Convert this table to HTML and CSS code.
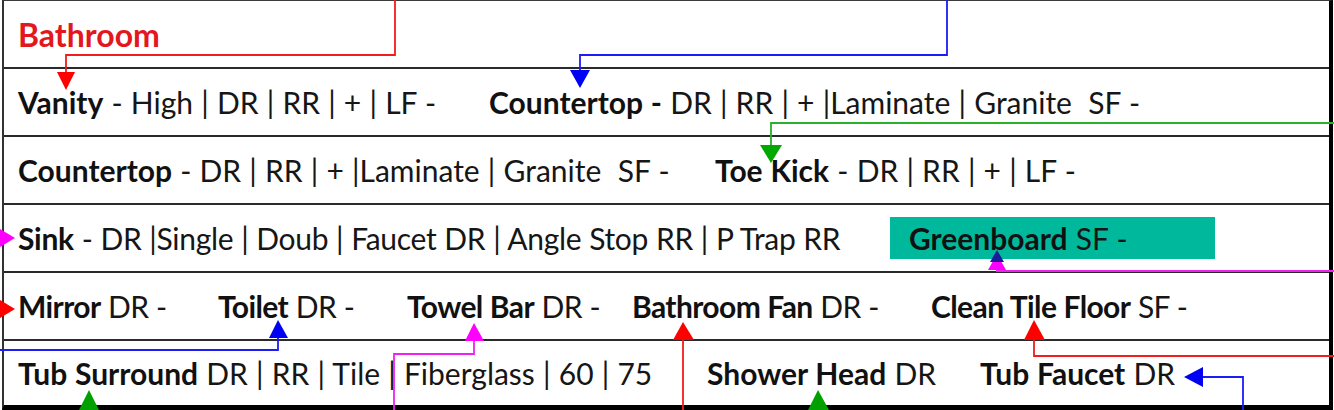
FILE: index.html
```html
<!DOCTYPE html>
<html>
<head>
<meta charset="utf-8">
<link rel="stylesheet" href="styles.css">
</head>
<body>
<div class="page">
  <div class="sheet">
    <div class="row">
      <span class="item title">Bathroom</span>
    </div>
    <div class="row">
      <span class="item w-vanity"><b>Vanity</b> - High | DR | RR | + | LF -</span>
      <span class="item"><b>Countertop -</b> DR | RR | + |Laminate | Granite&nbsp; SF -</span>
    </div>
    <div class="row">
      <span class="item w-counter"><b>Countertop</b> - DR | RR | + |Laminate | Granite&nbsp; SF -</span>
      <span class="item"><b>Toe Kick</b> - DR | RR | + | LF -</span>
    </div>
    <div class="row">
      <span class="item w-sink narrow"><b>Sink</b> - DR |Single | Doub | Faucet DR | Angle Stop RR | P Trap RR</span>
      <div class="green-box"><span class="item"><b>Greenboard</b> SF -</span></div>
    </div>
    <div class="row tight">
      <span class="item w-mirror"><b>Mirror</b> DR -</span>
      <span class="item w-toilet"><b>Toilet</b> DR -</span>
      <span class="item w-towel"><b>Towel Bar</b> DR -</span>
      <span class="item w-fan"><b>Bathroom Fan</b> DR -</span>
      <span class="item"><b>Clean Tile Floor</b> SF -</span>
    </div>
    <div class="row last">
      <span class="item w-tub"><b>Tub Surround</b> DR | RR | Tile | Fiberglass | 60 | 75</span>
      <span class="item w-shower"><b>Shower Head</b> DR</span>
      <span class="item"><b>Tub Faucet</b> DR</span>
    </div>
  </div>
  <svg class="connectors" width="1334" height="410" viewBox="0 0 1334 410" xmlns="http://www.w3.org/2000/svg">
    <g fill="none" stroke-width="1.8">
      <polyline stroke="#f21c1c" points="395,0 395,55 66,55 66,74"/>
      <polyline stroke="#1c1cf5" points="947,0 947,55 580,55 580,72"/>
      <polyline stroke="#2ab02a" points="1334,123 771,123 771,147"/>
      <polyline stroke="#f020f0" points="1334,271 997,271 997,264"/>
      <polyline stroke="#1c1cf5" points="0,350 278,350 278,337"/>
      <polyline stroke="#f020f0" points="394,410 394,354 474,354 474,340"/>
      <polyline stroke="#f21c1c" points="683,410 683,338"/>
      <polyline stroke="#f21c1c" points="1334,356 1034,356 1034,338"/>
      <polyline stroke="#1c1cf5" points="1243,410 1243,377 1200,377"/>
    </g>
    <polygon fill="#f00" points="57,72 75,72 66,90"/>
    <polygon fill="#0000f5" points="570,70 590,70 580,88"/>
    <polygon fill="#00a800" points="760,145 782,145 771,163"/>
    <polygon fill="#ff00ff" points="0,229 15,238 0,247"/>
    <polygon fill="#ff00ff" points="988,270 1006,270 997,254"/>
    <polygon fill="#1a1a9a" points="990,262 1004,262 997,250"/>
    <polygon fill="#f00" points="0,300 15,309 0,318"/>
    <polygon fill="#0000f5" points="269,338 288,338 278,320"/>
    <polygon fill="#ff00ff" points="465,341 484,341 474,323"/>
    <polygon fill="#f00" points="673,340 694,340 683,322"/>
    <polygon fill="#f00" points="1024,340 1045,340 1034,320"/>
    <polygon fill="#00a000" points="79,410 99,410 89,390"/>
    <polygon fill="#00a000" points="808,410 829,410 818,390"/>
    <polygon fill="#0000f5" points="1203,367 1203,387 1184,377"/>
  </svg>
</div>
</body>
</html>
```

FILE: styles.css
```css
html, body {
  margin: 0;
  padding: 0;
  background: #ffffff;
}

.page {
  position: relative;
  width: 1334px;
  height: 410px;
  overflow: hidden;
}

.sheet {
  box-sizing: border-box;
  margin-left: 2px;
  width: 1331px;
  height: 410px;
  border-top: 1px solid #3a3a3a;
  border-left: 2px solid #333333;
  border-right: 4px solid #000000;
  border-bottom: 5px solid #000000;
  display: flex;
  flex-direction: column;
  font-family: "Lato", "Noto Sans", sans-serif;
  font-size: 30px;
  word-spacing: 0.5px;
  color: #161616;
}

.row {
  box-sizing: border-box;
  height: 68px;
  flex: 0 0 68px;
  border-bottom: 2px solid #2a2a2a;
  display: flex;
  align-items: center;
  padding-left: 14px;
  white-space: nowrap;
}

.row.last {
  flex: 1 1 auto;
  border-bottom: none;
}

.row.tight {
  letter-spacing: -0.6px;
}

.narrow {
  letter-spacing: -0.3px;
}

.item b {
  font-weight: 700;
  color: #111111;
}

.title {
  color: #e3171e;
  font-weight: 700;
  font-size: 32px;
}

.w-vanity { flex: 0 0 471px; }
.w-counter { flex: 0 0 697px; }
.w-sink { flex: 0 0 872px; }
.w-mirror { flex: 0 0 200px; }
.w-toilet { flex: 0 0 189px; }
.w-towel { flex: 0 0 225px; }
.w-fan { flex: 0 0 299px; }
.w-tub { flex: 0 0 689px; }
.w-shower { flex: 0 0 273px; }

.green-box {
  box-sizing: border-box;
  flex: 0 0 325px;
  height: 42px;
  background: #00b89c;
  padding-left: 19px;
  display: flex;
  align-items: center;
}

.connectors {
  position: absolute;
  left: 0;
  top: 0;
  pointer-events: none;
}
```
